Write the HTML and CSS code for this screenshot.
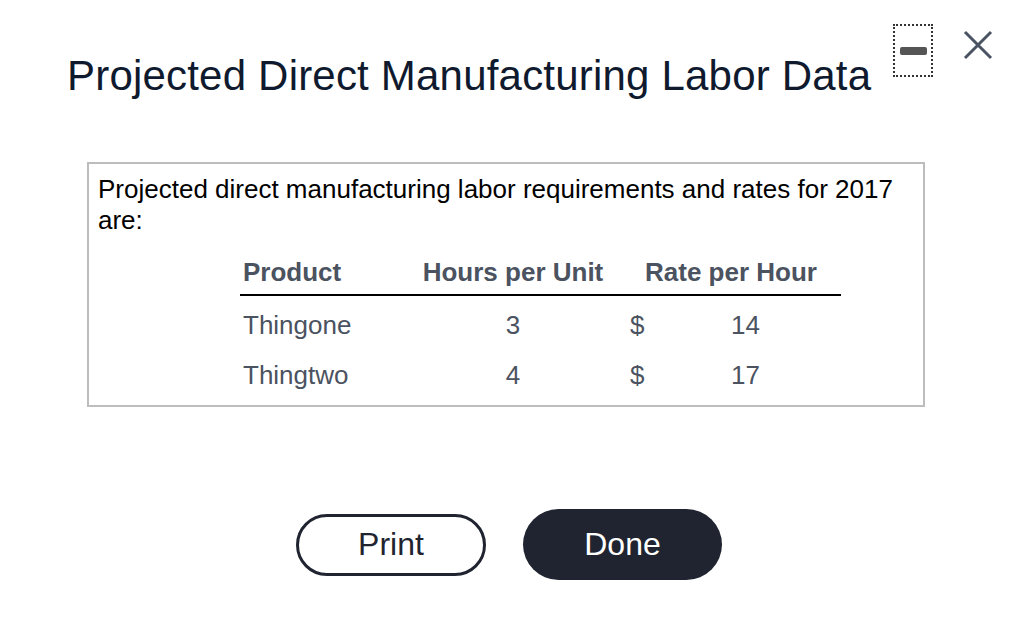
FILE: index.html
```html
<!DOCTYPE html>
<html lang="en">
<head>
<meta charset="utf-8">
<title>Projected Direct Manufacturing Labor Data</title>
<link rel="stylesheet" href="styles.css">
</head>
<body>
<div class="dialog">
  <div class="window-controls">
    <button class="ctrl minimize" aria-label="Minimize"><span class="dash"></span></button>
    <button class="ctrl close" aria-label="Close">
      <svg width="30" height="30" viewBox="0 0 30 30"><path d="M2 2 L28 28 M28 2 L2 28" stroke="#4a5361" stroke-width="3" fill="none"/></svg>
    </button>
  </div>
  <h1 class="title">Projected Direct Manufacturing Labor Data</h1>
  <div class="info-box">
    <p class="intro">Projected direct manufacturing labor requirements and rates for 2017 are:</p>
    <table class="labor">
      <thead>
        <tr><th class="c-prod">Product</th><th class="c-hours">Hours per Unit</th><th class="c-rate" colspan="2">Rate per Hour</th></tr>
      </thead>
      <tbody>
        <tr><td class="c-prod">Thingone</td><td class="c-hours">3</td><td class="c-cur">$</td><td class="c-val">14</td></tr>
        <tr><td class="c-prod">Thingtwo</td><td class="c-hours">4</td><td class="c-cur">$</td><td class="c-val">17</td></tr>
      </tbody>
    </table>
  </div>
  <div class="actions">
    <button class="btn btn-outline">Print</button>
    <button class="btn btn-solid">Done</button>
  </div>
</div>
</body>
</html>
```
FILE: styles.css
```css
html, body {
  margin: 0;
  padding: 0;
  background: #ffffff;
}
body {
  font-family: "Liberation Sans", Arial, sans-serif;
  width: 1020px;
  height: 644px;
  overflow: hidden;
}
.dialog {
  position: relative;
  padding: 0 95px 0 87px;
}
.window-controls {
  position: absolute;
  top: 24px;
  right: 27px;
  display: flex;
  align-items: flex-start;
  gap: 30px;
}
.ctrl {
  background: none;
  border: none;
  padding: 0;
  margin: 0;
  cursor: pointer;
}
.minimize {
  width: 40px;
  height: 53px;
  border: 2px dotted #333;
  box-sizing: border-box;
  display: flex;
  align-items: center;
  justify-content: center;
}
.minimize .dash {
  display: block;
  width: 27px;
  height: 8px;
  background: #555;
  border-radius: 2px;
}
.close {
  margin-top: 6px;
  width: 30px;
  height: 30px;
}
.close svg { display: block; }
.title {
  margin: 0 0 0 -20px;
  padding-top: 51px;
  font-size: 42px;
  line-height: 50px;
  font-weight: normal;
  color: #0f1a2e;
  white-space: nowrap;
  letter-spacing: 0.2px;
}
.info-box {
  margin-top: 61px;
  width: 838px;
  height: 245px;
  box-sizing: border-box;
  border: 2px solid #bdbdbd;
  padding: 10px 9px;
}
.intro {
  margin: 0;
  font-size: 26px;
  line-height: 31px;
  color: #000;
}
.labor {
  margin: 14px 0 0 142px;
  border-collapse: collapse;
  font-size: 26px;
  color: #4b5260;
}
.labor th {
  font-weight: bold;
  height: 44px;
  padding: 0;
  vertical-align: middle;
  border-bottom: 2px solid #000;
}
.labor td {
  height: 42px;
  padding: 8px 0 0 0;
  vertical-align: middle;
}
.labor .c-prod { width: 165px; text-align: left; padding-left: 3px; box-sizing: border-box; }
.labor .c-hours { width: 216px; text-align: center; }
.labor th.c-rate { text-align: center; }
.labor .c-cur { width: 40px; text-align: left; padding-left: 9px; box-sizing: border-box; }
.labor .c-val { width: 180px; text-align: left; padding-left: 70px; box-sizing: border-box; }
.actions {
  margin-top: 102px;
  display: flex;
  justify-content: center;
  align-items: center;
  gap: 37px;
  margin-left: -87px;
  margin-right: -95px;
  padding-right: 2px;
}
.btn {
  font-family: "Liberation Sans", Arial, sans-serif;
  font-size: 32px;
  border-radius: 40px;
  cursor: pointer;
  box-sizing: border-box;
}
.btn-outline {
  width: 190px;
  height: 62px;
  background: #fff;
  border: 3px solid #1f2430;
  color: #1f2430;
}
.btn-solid {
  width: 199px;
  height: 71px;
  background: #1f2430;
  border: none;
  color: #fff;
}
```
